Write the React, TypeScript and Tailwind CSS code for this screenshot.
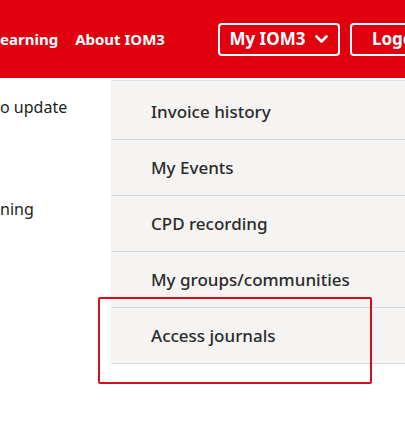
import React from 'react';

const items = ['Invoice history', 'My Events', 'CPD recording', 'My groups/communities', 'Access journals'];

const App: React.FC = () => {
    return (
        <div className="relative w-[405px] h-[434px] overflow-hidden bg-white" style={{ fontFamily: '"Noto Sans", Lato, sans-serif' }}>
            {/* header */}
            <div className="h-[78px] bg-[#e1000f] flex items-center text-white whitespace-nowrap">
                <span className="text-[15px] font-bold">earning</span>
                <span className="ml-[17px] text-[15px] font-bold">About IOM3</span>
                <div className="ml-[53px] w-[122px] h-[33px] border-2 border-white rounded-[4px] flex items-center justify-center gap-[10px] shrink-0">
                    <span className="text-[17px] font-bold">My IOM3</span>
                    <svg width="13" height="9" viewBox="0 0 13 9" fill="none">
                        <path d="M1.5 1.5 L6.5 6.5 L11.5 1.5" stroke="white" strokeWidth="2.6" strokeLinecap="round" strokeLinejoin="round" />
                    </svg>
                </div>
                <div className="ml-[10px] w-[100px] h-[33px] border-2 border-white rounded-[4px] flex items-center pl-[20px] shrink-0">
                    <span className="text-[17px] font-bold">Logout</span>
                </div>
            </div>

            {/* page body */}
            <div className="text-[16px] text-[#222] whitespace-nowrap">
                <p className="mt-[18px] leading-[22px]">o update</p>
                <p className="mt-[80px] leading-[22px]">ning</p>
            </div>

            {/* dropdown */}
            <div className="absolute left-[111px] top-[80px] w-[300px] bg-[#f5f4f2] border-t border-[#e2e2e2] pt-[3px]">
                {items.map((item) => (
                    <div key={item} className="h-[56px] flex items-center pl-[40px] border-b border-[#d8d8d8] text-[17px] font-medium text-[#2a2a2a]">
                        {item}
                    </div>
                ))}
            </div>

            {/* highlight */}
            <div className="absolute left-[98px] top-[297px] w-[274px] h-[87px] border-2 border-[#d0101b] rounded-[2px]" />
        </div>
    );
};

export default App;
